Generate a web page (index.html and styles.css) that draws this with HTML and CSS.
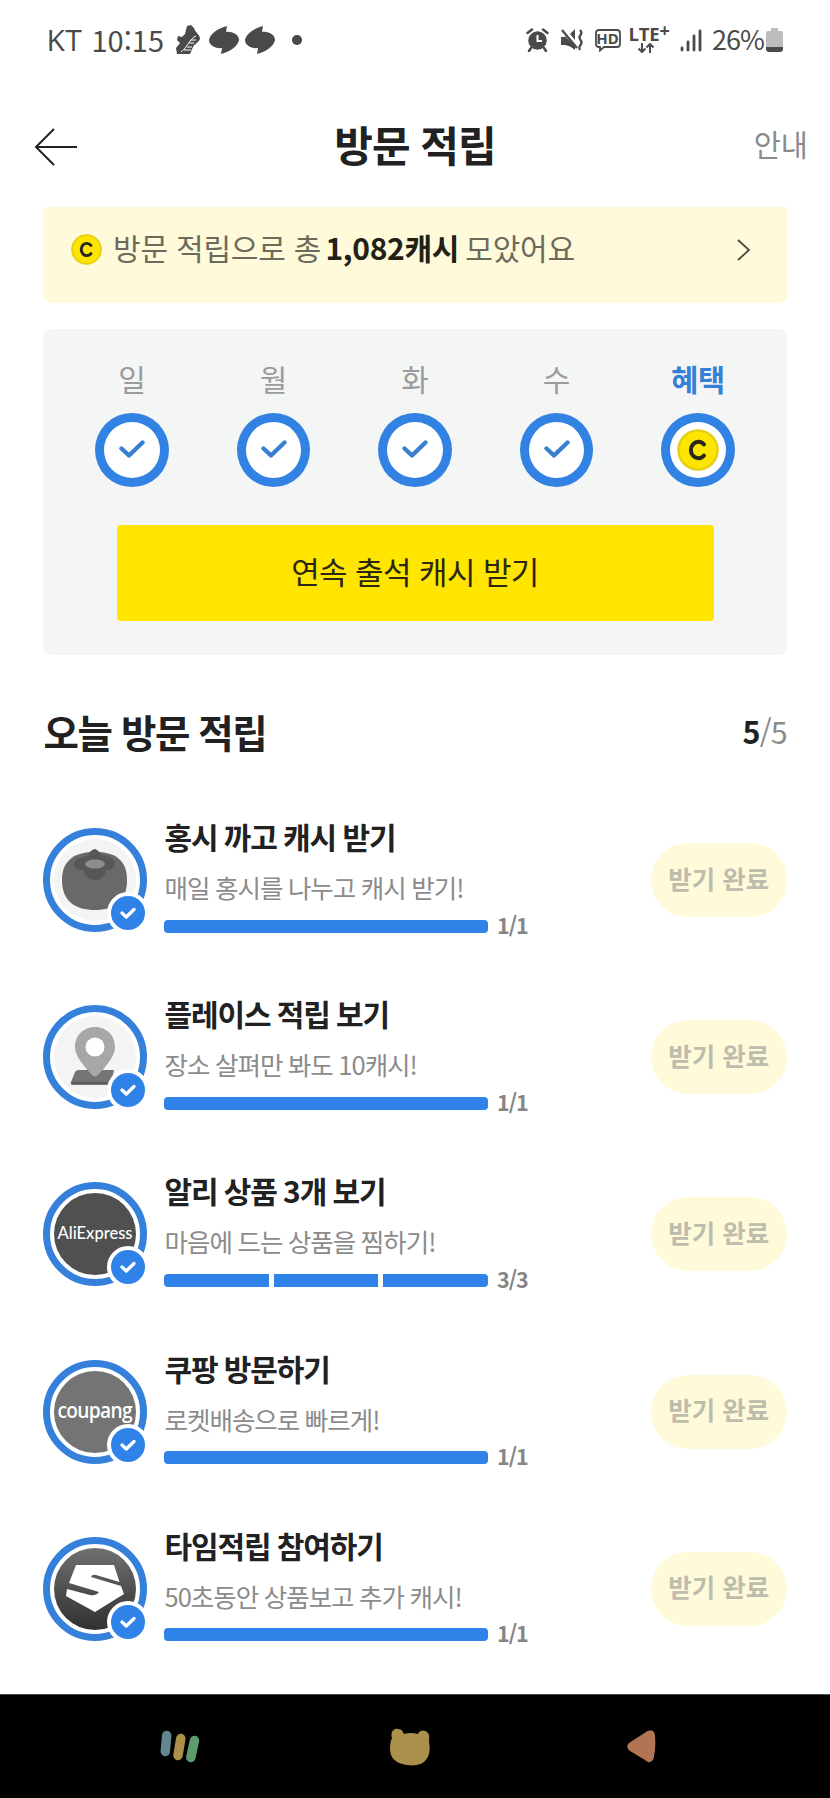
FILE: index.html
```html
<!DOCTYPE html>
<html lang="ko">
<head>
<meta charset="utf-8">
<title>방문 적립</title>
<link rel="stylesheet" href="styles.css">
</head>
<body>
<svg width="0" height="0" class="defs" aria-hidden="true">
  <defs>
    <linearGradient id="shade" x1="0" y1="0" x2="0" y2="1"><stop offset="0" stop-color="#707070"/><stop offset="1" stop-color="#303030"/></linearGradient>
    <symbol id="swirl" viewBox="0 0 30 28"><path d="M18 0 17 6C24 5 30 9 30 14 29 20 21 26 12 28L13 22C6 23 0 19 0 14 1 8 9 2 18 0Z"/></symbol>
    <symbol id="tick" viewBox="0 0 26 18"><path d="M2.500 8.500 10 15.500 23.500 2.500" fill="none" stroke="currentColor" stroke-width="4.400" stroke-linecap="round" stroke-linejoin="round"/></symbol>
    <symbol id="minitick" viewBox="0 0 16 12"><path d="M2 6 6.300 10 14 2.500" fill="none" stroke="currentColor" stroke-width="3.300" stroke-linecap="round" stroke-linejoin="round"/></symbol>
    <symbol id="coin" viewBox="0 0 42 42"><circle cx="21" cy="21" r="19.500" fill="#fee500" stroke="#e6ce12" stroke-width="2.500"/><path d="M27 15.500A7.500 8.300 0 1 0 27 26.500" fill="none" stroke="#28261d" stroke-width="4" stroke-linecap="round"/></symbol>
  </defs>
</svg>
<header class="status">
  <div class="status-left">
    <span class="carrier">KT</span><span class="clock">10:15</span>
    <svg class="shoe" width="24" height="30" viewBox="0 0 24 30"><path d="M11 1 15 0 18 3C19 7 23 9 24 13 24 17 18 19 17 22L14 29H1L0 23 4 18 1 15 2 11 6 12 9 9Z" fill="#4a4a4a"/><path d="M20 11C13 14 12 22 5 27M20 15H15M18 18H13M16 22H11M15 25H8" stroke="#fff" stroke-width="1" fill="none"/></svg>
    <svg class="swirl" width="30" height="28"><use href="#swirl"/></svg>
    <svg class="swirl second" width="30" height="28"><use href="#swirl"/></svg>
    <i class="dot"></i>
  </div>
  <div class="status-right">
    <svg class="alarm" width="23" height="24" viewBox="0 0 23 24"><circle cx="11.500" cy="12.500" r="9.300" fill="#4a4a4a"/><path d="M1.500 5 6 1.500M21.500 5 17 1.500M5 20 3 23M18 20 20 23" stroke="#4a4a4a" stroke-width="2.500" stroke-linecap="round"/><path d="M11.500 7V13H16" fill="none" stroke="#fff" stroke-width="2"/></svg>
    <svg class="mute" width="24" height="24" viewBox="0 0 24 24"><path d="M1 9H5L15 18V22L8 17H1ZM10 6 15 1V12ZM5 8 15 18V20L2 16Z" fill="#4a4a4a"/><path d="M2 2 17 20M20 2Q22.500 4.500 20.500 7T20.500 12 20.500 17 20 22" fill="none" stroke="#4a4a4a" stroke-width="2.300"/></svg>
    <span class="hd"><svg width="28" height="24" viewBox="0 0 28 24"><path d="M5 2H23Q26 2 26 5V16Q26 19 23 19H10L6 22.500V19H5Q2 19 2 16V5Q2 2 5 2Z" fill="none" stroke="#4a4a4a" stroke-width="1.800"/></svg><b>HD</b></span>
    <span class="lte"><b>LTE<sup>+</sup></b><svg width="18" height="10" viewBox="0 0 18 10"><path d="M5 0V9M1.500 5.500 5 9 8.500 5.500M13 10V1M9.500 4.500 13 1 16.500 4.500" fill="none" stroke="#4a4a4a" stroke-width="2"/></svg></span>
    <svg class="signal" width="22" height="24" viewBox="0 0 22 24"><path d="M2 20V22M8 14V22M14 8V22M20 3V22" stroke="#4a4a4a" stroke-width="2.800" stroke-linecap="round"/></svg>
    <span class="percent">26%</span>
    <svg class="battery" width="17" height="24" viewBox="0 0 17 24"><path d="M5 0H12V3H15Q17 3 17 5V19H0V5Q0 3 2 3H5Z" fill="#bdbdbd"/><path d="M0 19H17V21Q17 24 14 24H3Q0 24 0 21Z" fill="#4a4a4a"/></svg>
  </div>
</header>
<nav class="topbar">
  <svg width="44" height="38" viewBox="0 0 44 38"><path d="M43 19H2M20 1 2 19 20 37" fill="none" stroke="#222" stroke-width="2"/></svg>
  <h1>방문 적립</h1>
  <span class="guide">안내</span>
</nav>
<main>
  <section class="banner">
    <svg class="coin" width="31" height="31"><use href="#coin"/></svg>
    <p>방문 적립으로 총 <b>1,082캐시</b> 모았어요</p>
    <svg class="chevron" width="14" height="22" viewBox="0 0 14 22"><path d="M1 1 12 11 1 21" fill="none" stroke="#4b4b42" stroke-width="1.800"/></svg>
  </section>
  <section class="attendance">
    <ul class="days">
      <li><span>일</span><div class="ring"><svg width="26" height="18"><use href="#tick"/></svg></div></li>
      <li><span>월</span><div class="ring"><svg width="26" height="18"><use href="#tick"/></svg></div></li>
      <li><span>화</span><div class="ring"><svg width="26" height="18"><use href="#tick"/></svg></div></li>
      <li><span>수</span><div class="ring"><svg width="26" height="18"><use href="#tick"/></svg></div></li>
      <li class="bonus"><span>혜택</span><div class="ring"><svg width="42" height="42"><use href="#coin"/></svg></div></li>
    </ul>
    <button class="claim">연속 출석 캐시 받기</button>
  </section>
  <div class="section-head"><h2>오늘 방문 적립</h2><span class="count"><b>5</b>/5</span></div>
  <ul class="missions">
    <li>
      <div class="avatar"><svg width="82" height="82" viewBox="0 0 82 82"><circle cx="41" cy="41" r="41" fill="#f4f4f4"/><path d="M41 13C60 13 73 20 73 41 73 63 60 71 41 71S8 63 8 41C8 20 22 13 41 13Z" fill="#696969"/><path d="M41 10Q44 11 48 16C56 18 62 20 61 25 60 30 56 31 52 31 51 38 46 41 41 41S31 38 30 31C24 31 20 29 20 25 20 20 27 18 33 17 36 12 39 10 41 10Z" fill="#575757"/><ellipse cx="41" cy="25" rx="10" ry="4.500" fill="#8d8d8d"/></svg><i class="badge"><svg width="16" height="12"><use href="#minitick"/></svg></i></div>
      <div class="info"><h3>홍시 까고 캐시 받기</h3><p>매일 홍시를 나누고 캐시 받기!</p><div class="progress"><div class="bar"><i></i></div><b>1/1</b></div></div>
      <button class="done">받기 완료</button>
    </li>
    <li>
      <div class="avatar"><svg width="82" height="82" viewBox="0 0 82 82"><circle cx="41" cy="41" r="41" fill="#f4f4f4"/><path d="M25 54H60L57 67Q56 69 53 69H19Q16 69 17 66L21 56Q22 54 25 54Z" fill="#747474"/><path d="M17 67H56" stroke="#5b5b5b" stroke-width="2"/><path d="M41 11C53 11 61 20 61 31 61 41 51 51 44 59Q41 62 38 59C31 51 21 41 21 31 21 20 29 11 41 11Z" fill="#a7a7a7"/><circle cx="41" cy="31" r="9.500" fill="#fff"/></svg><i class="badge"><svg width="16" height="12"><use href="#minitick"/></svg></i></div>
      <div class="info"><h3>플레이스 적립 보기</h3><p>장소 살펴만 봐도 10캐시!</p><div class="progress"><div class="bar"><i></i></div><b>1/1</b></div></div>
      <button class="done">받기 완료</button>
    </li>
    <li>
      <div class="avatar"><span class="logo ali">AliExpress</span><i class="badge"><svg width="16" height="12"><use href="#minitick"/></svg></i></div>
      <div class="info"><h3>알리 상품 3개 보기</h3><p>마음에 드는 상품을 찜하기!</p><div class="progress"><div class="bar"><i></i><i></i><i></i></div><b>3/3</b></div></div>
      <button class="done">받기 완료</button>
    </li>
    <li>
      <div class="avatar"><span class="logo coupang"><span>coupang</span></span><i class="badge"><svg width="16" height="12"><use href="#minitick"/></svg></i></div>
      <div class="info"><h3>쿠팡 방문하기</h3><p>로켓배송으로 빠르게!</p><div class="progress"><div class="bar"><i></i></div><b>1/1</b></div></div>
      <button class="done">받기 완료</button>
    </li>
    <li>
      <div class="avatar"><svg width="82" height="82" viewBox="0 0 82 82"><circle cx="41" cy="41" r="41" fill="url(#shade)"/><path d="M22 17H60L65.500 34 42 27Q38 26 37 29L67 38 70 46 41 64 12 48 13 41 36 47Q42 48 45 44L15 35Z" fill="#fff"/></svg><i class="badge"><svg width="16" height="12"><use href="#minitick"/></svg></i></div>
      <div class="info"><h3>타임적립 참여하기</h3><p>50초동안 상품보고 추가 캐시!</p><div class="progress"><div class="bar"><i></i></div><b>1/1</b></div></div>
      <button class="done">받기 완료</button>
    </li>
  </ul>
</main>
<footer class="sysnav">
  <svg width="41" height="34" viewBox="0 0 41 34"><g fill="none" stroke-linecap="round" stroke-width="9.500"><path d="M6.700 5.500 5.300 21.500" stroke="#638790"/><path d="M20.800 8.500 18 25.500" stroke="#aa904b"/><path d="M34.500 10.500 30.800 27.500" stroke="#5d9c6d"/></g></svg>
  <svg class="home" width="40" height="38" viewBox="0 0 40 38"><path d="M2 10C0 4 4 0 8 1 12 1 13 4 14 6Q21 4 28 6C29 2 35 1 38 5 40 8 39 11 39 13 41 25 39 37 22 37.500 7 37 0 31 0 21Q0 14 2 10Z" fill="#aa904b"/></svg>
  <svg width="29" height="33" viewBox="0 0 29 33"><path d="M19 2C24-1 28 1 28 6Q29 17 27 27C26 32 22 34 18 30L3 21Q-2 17 2 13Z" fill="#b17553"/></svg>
</footer>
</body>
</html>
```
FILE: styles.css
```css
* { box-sizing: border-box; }
body { margin: 0; width: 830px; height: 1798px; overflow: hidden; display: flex; flex-direction: column; background: #fff; color: #212121; font-family: "Noto Sans CJK KR", sans-serif; }
h1, h2, h3, p, ul { margin: 0; padding: 0; font-weight: inherit; list-style: none; }
svg { display: block; flex: none; }
.defs { position: absolute; }
button { border: 0; padding: 0; font-family: inherit; }

.status { height: 80px; flex: none; display: flex; justify-content: space-between; padding: 0 47px 0 46.500px; color: #4a4a4a; fill: #4a4a4a; }
.status-left, .status-right { display: flex; align-items: center; height: 80px; }
.carrier { width: 45px; padding-bottom: 1px; font: 30px/40px "Open Sans", sans-serif; letter-spacing: .3px; }
.clock { width: 84.500px; padding-bottom: 3px; font: 29px/38px "Noto Sans CJK KR", sans-serif; letter-spacing: 0; }
.swirl { margin-left: 9px; }
.swirl.second { margin-left: 6px; }
.dot { width: 9.500px; height: 9.500px; margin-left: 17px; border-radius: 50%; background: #4a4a4a; }
.mute { margin-left: 11px; }
.hd { position: relative; margin-left: 10px; }
.hd b { position: absolute; left: 0; top: 0; width: 28px; font: 700 15px/21px "Noto Sans", sans-serif; text-align: center; }
.lte { display: flex; flex-direction: column; width: 42px; height: 28px; margin: 0 9px 0 7px; }
.lte b { font: 700 18.500px/16px "Open Sans", sans-serif; white-space: nowrap; letter-spacing: -.2px; }
.lte sup { font-size: 18px; line-height: 0; vertical-align: 4px; }
.lte svg { margin-left: 8px; margin-top: 1px; }
.percent { width: 54px; margin-left: 10.500px; padding-bottom: 3px; font: 27px/38px "Noto Sans CJK KR", sans-serif; letter-spacing: -1px; }

.topbar { height: 127px; flex: none; display: grid; grid-template-columns: 120px 1fr 120px; align-items: center; padding: 7px 22px 0 34px; }
.topbar h1 { font-size: 42px; line-height: 60px; font-weight: 700; text-align: center; letter-spacing: -1px; padding: 0 12px 7px 0; }
.guide { justify-self: end; padding-bottom: 9px; font-size: 29.500px; line-height: 40px; color: #8b8b8b; }

main { flex: 1; min-height: 0; padding: 0 43px; }
.banner { height: 96px; display: flex; align-items: center; padding: 0 36px 11px 28px; border-radius: 0 0 8px 8px; background: #fffad9; color: #6b6a5d; }
.banner p { flex: 1; margin-left: 11px; padding-bottom: 6px; font-size: 30px; line-height: 44px; letter-spacing: -.2px; }
.banner b { margin: 0 -2px 0 -4px; color: #212116; letter-spacing: -.3px; }

.attendance { height: 326px; margin-top: 26px; border-radius: 8px; background: #f4f5f5; display: flex; flex-direction: column; align-items: center; }
.days { display: grid; grid-template-columns: repeat(5, 141.500px); padding-top: 29px; }
.days li { display: flex; flex-direction: column; align-items: center; }
.days span { height: 55px; font-size: 30px; line-height: 40px; color: #9b9b9b; }
.days .bonus span { font-weight: 700; color: #3580d6; letter-spacing: -.5px; font-size: 29.500px; }
.ring { width: 73.500px; height: 74px; display: grid; place-items: center; border: 9px solid #3182e2; border-radius: 50%; background: #fff; color: #3a7fd0; }
.ring svg { margin-top: -3px; }
.bonus .ring svg { margin-top: 0; }
.claim { width: 597px; height: 96px; margin-top: 38px; padding-bottom: 6px; border-radius: 4px; background: #ffe500; color: #2a2712; font-size: 31px; letter-spacing: -.6px; }

.section-head { display: flex; justify-content: space-between; align-items: center; height: 60px; margin-top: 46px; }
.section-head h2 { padding-left: .5px; font-size: 38.500px; line-height: 60px; font-weight: 700; letter-spacing: -1.400px; }
.count { font-size: 30.500px; letter-spacing: -.8px; color: #8b8b8b; }
.count b { color: #212121; }

.missions { margin-top: 55px; }
.missions li { display: flex; align-items: flex-start; height: 177.200px; }
.avatar { position: relative; flex: none; width: 104px; height: 104px; margin-top: 12px; display: grid; place-items: center; border: 7px solid #3580db; border-radius: 50%; background: #fff; }
.logo { width: 82px; height: 82px; border-radius: 50%; display: flex; justify-content: center; color: #fff; white-space: nowrap; }
.ali { background: #505050; font: 500 16.500px/80px Lato, sans-serif; letter-spacing: 0; }
.coupang { background: #747474; font: 600 22px/77px "Open Sans", sans-serif; letter-spacing: -.8px; }
.coupang span { transform: scaleX(.87); }
.badge { position: absolute; left: 56.500px; top: 57px; width: 42px; height: 42px; display: grid; place-items: center; border: 4px solid #fff; border-radius: 50%; background: #2f82e8; color: #fff; }
.info { flex: 1; margin-left: 17px; }
.info h3 { padding-left: .5px; font-size: 30px; line-height: 40px; font-weight: 700; letter-spacing: -1.100px; word-spacing: -1px; }
.info p { margin-top: 13px; padding-left: .5px; font-size: 25.500px; line-height: 36px; letter-spacing: -1px; word-spacing: -.6px; color: #8b8b8b; }
.progress { display: flex; align-items: center; height: 26px; margin-top: 8px; }
.bar { display: flex; gap: 5px; width: 324px; height: 13px; overflow: hidden; border-radius: 4px; }
.bar i { flex: 1; background: #2f82e8; }
.progress b { margin-left: 9px; padding-bottom: 4px; font-size: 21.500px; font-weight: 700; letter-spacing: -1px; color: #858585; }
.done { width: 136.500px; height: 74px; margin-top: 27px; padding-bottom: 6px; border-radius: 37px; background: #fffad9; color: #bdbdad; font-size: 25.500px; font-weight: 700; }

.sysnav { height: 104px; flex: none; display: flex; align-items: center; padding: 0 174.500px 0 160px; justify-content: space-between; background: #000; border-top: 1px solid #454b48; }
.home { margin-right: 8px; }
```
